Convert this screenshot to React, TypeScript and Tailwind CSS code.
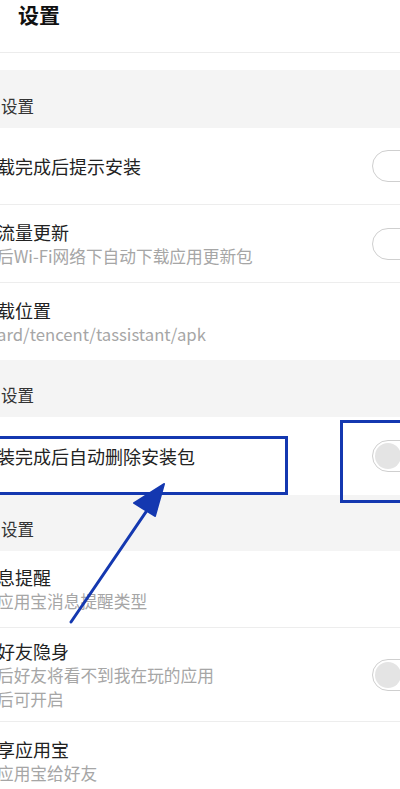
import React from "react";

const font = { fontFamily: '"Noto Sans CJK SC", "Noto Sans", sans-serif' };

type Row = {
  title: string;
  subs?: string[];
  toggle?: "off" | "thumb";
  height: string;
};

const Toggle = ({ kind }: { kind: "off" | "thumb" }) => (
  <div className="mr-[-30px] flex h-[32px] w-[58px] shrink-0 items-center rounded-full border-[1.5px] border-[#cfcfcf] bg-white px-[2px]">
    {kind === "thumb" && (
      <div className="h-[26px] w-[26px] rounded-full bg-[#e4e4e4]" />
    )}
  </div>
);

const SettingRow = ({ row, last }: { row: Row; last?: boolean }) => (
  <div
    className={`flex items-center justify-between bg-white ${row.height} ${
      last ? "" : "border-b border-[#ededed]"
    }`}
  >
    <div className="ml-[-3px] flex flex-col">
      <span className="text-[18px] leading-[24px] text-[#222]">{row.title}</span>
      {row.subs?.map((s) => (
        <span key={s} className="text-[16.7px] leading-[24px] text-[#a6a6a6]">
          {s}
        </span>
      ))}
    </div>
    {row.toggle && <Toggle kind={row.toggle} />}
  </div>
);

const SectionHeader = ({ label, height }: { label: string; height: string }) => (
  <div className={`flex items-end bg-[#f4f4f4] pb-[10px] ${height}`}>
    <span className="ml-[1px] text-[16.5px] leading-[24px] text-[#333]">{label}</span>
  </div>
);

export default function App() {
  return (
    <div className="relative h-[789px] w-[400px] overflow-hidden bg-white" style={font}>
      {/* top bar */}
      <div className="h-[53px] border-b border-[#ececec] bg-white pl-[18px] shadow-[0_1px_2px_rgba(0,0,0,0.03)]">
        <span className="block text-[21px] font-bold leading-[28px] text-[#111]">设置</span>
      </div>
      <div className="h-[17px] bg-white" />

      <SectionHeader label="设置" height="h-[58px]" />
      <SettingRow row={{ title: "载完成后提示安装", toggle: "off", height: "h-[77px]" }} />
      <SettingRow
        row={{
          title: "流量更新",
          subs: ["后Wi-Fi网络下自动下载应用更新包"],
          toggle: "off",
          height: "h-[78px]",
        }}
      />
      <SettingRow
        row={{ title: "载位置", subs: ["ard/tencent/tassistant/apk"], height: "h-[77px]" }}
        last
      />

      <SectionHeader label="设置" height="h-[57px]" />
      <SettingRow row={{ title: "装完成后自动删除安装包", toggle: "thumb", height: "h-[78px]" }} last />

      <SectionHeader label="设置" height="h-[56px]" />
      <SettingRow
        row={{ title: "息提醒", subs: ["应用宝消息提醒类型"], height: "h-[77px]" }}
      />
      <SettingRow
        row={{
          title: "好友隐身",
          subs: ["后好友将看不到我在玩的应用", "后可开启"],
          toggle: "thumb",
          height: "h-[94px]",
        }}
      />
      <div className="flex h-[70px] flex-col justify-start bg-white pt-[15px]">
        <span className="ml-[-3px] text-[18px] leading-[24px] text-[#222]">享应用宝</span>
        <span className="ml-[-3px] text-[16.7px] leading-[24px] text-[#a6a6a6]">应用宝给好友</span>
      </div>

      {/* annotation boxes */}
      <div className="absolute left-[-10px] top-[436px] h-[59px] w-[298px] border-[3px] border-[#1438b0]" />
      <div className="absolute left-[340px] top-[420px] h-[83px] w-[80px] border-[3px] border-[#1438b0]" />

      {/* annotation arrow */}
      <svg className="absolute left-0 top-0" width="400" height="789" viewBox="0 0 400 789">
        <line x1="71" y1="622" x2="150" y2="506" stroke="#1438b0" strokeWidth="3" strokeLinecap="round" />
        <polygon points="164,484 134,503 155,516" fill="#1438b0" stroke="#1438b0" strokeWidth="2" strokeLinejoin="round" />
      </svg>
    </div>
  );
}
